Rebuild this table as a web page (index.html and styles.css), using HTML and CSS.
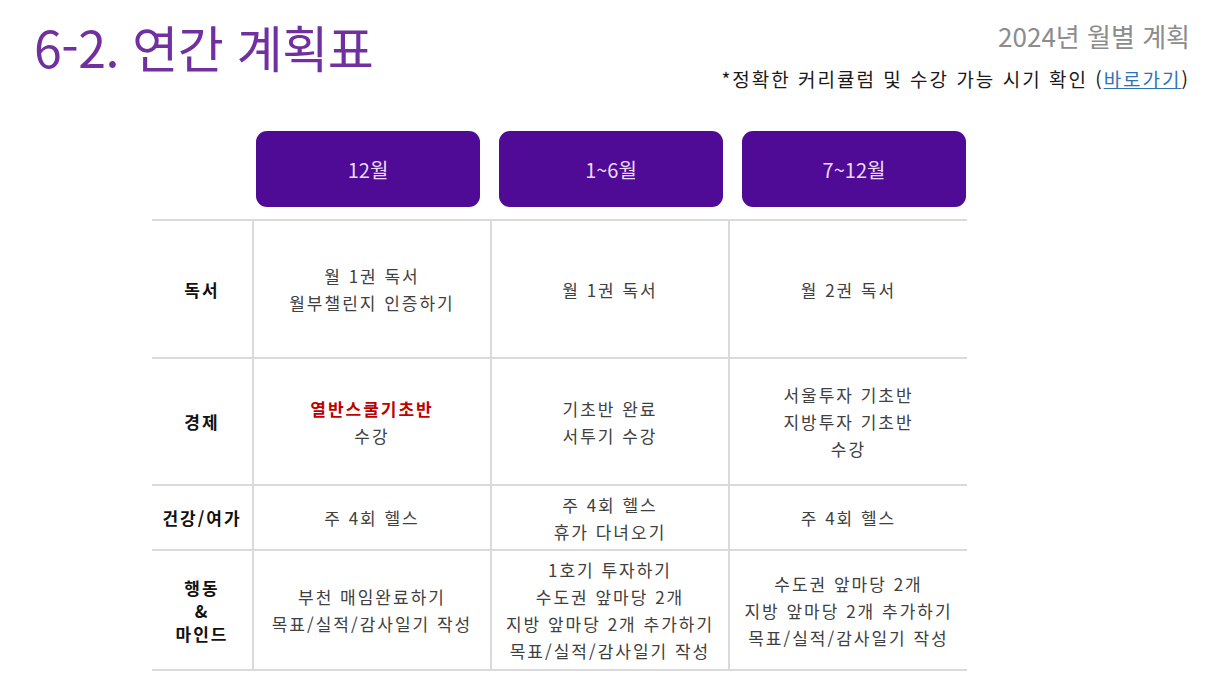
FILE: index.html
```html
<!DOCTYPE html>
<html lang="ko">
  <head>
    <meta charset="UTF-8" />
    <meta name="viewport" content="width=device-width, initial-scale=1.0" />
    <title>6-2. 연간 계획표</title>
    <link rel="stylesheet" href="styles.css">
  </head>
  <body>
    <!-- Page header -->
    <div class="top">
      <h1>6-2. 연간 계획표</h1>
      <div class="info">
        <div class="year">2024년 월별 계획</div>
        <div class="note">*정확한 커리큘럼 및 수강 가능 시기 확인 (<a href="#">바로가기</a>)</div>
      </div>
    </div>

    <div class="plan">
      <!-- Period pills -->
      <div class="periods">
        <div class="pill">12월</div>
        <div class="pill">1~6월</div>
        <div class="pill">7~12월</div>
      </div>

      <table class="grid">
        <colgroup>
          <col class="c-label">
          <col class="c-col">
          <col class="c-col">
          <col class="c-col">
        </colgroup>
        <tr class="r-read">
          <th>독서</th>
          <td>월 1권 독서<br>월부챌린지 인증하기</td>
          <td>월 1권 독서</td>
          <td>월 2권 독서</td>
        </tr>
        <tr class="r-econ">
          <th>경제</th>
          <td><span class="hot">열반스쿨기초반</span><br>수강</td>
          <td>기초반 완료<br>서투기 수강</td>
          <td>서울투자 기초반<br>지방투자 기초반<br>수강</td>
        </tr>
        <tr class="r-health">
          <th>건강/여가</th>
          <td>주 4회 헬스</td>
          <td>주 4회 헬스<br>휴가 다녀오기</td>
          <td>주 4회 헬스</td>
        </tr>
        <tr class="r-act">
          <th>행동<br>&amp;<br>마인드</th>
          <td>부천 매임완료하기<br>목표/실적/감사일기 작성</td>
          <td>1호기 투자하기<br>수도권 앞마당 2개<br>지방 앞마당 2개 추가하기<br>목표/실적/감사일기 작성</td>
          <td>수도권 앞마당 2개<br>지방 앞마당 2개 추가하기<br>목표/실적/감사일기 작성</td>
        </tr>
      </table>
    </div>
  </body>
</html>
```

FILE: styles.css
```css
body {
  margin: 0;
  background-color: #ffffff;
  font-family: "Noto Sans CJK KR", "Noto Sans", sans-serif;
}

/* Header */
.top {
  display: flex;
  justify-content: space-between;
  align-items: flex-start;
  padding: 14px 26px 0 34px;
}

h1 {
  margin: 0;
  font-size: 50px;
  font-weight: 400;
  line-height: 64px;
  color: #7030a0;
  letter-spacing: -0.5px;
}

.info {
  text-align: right;
}

.year {
  font-size: 26px;
  line-height: 32px;
  color: #8c8c8c;
  margin-top: 6px;
}

.note {
  font-size: 19px;
  line-height: 26px;
  color: #1a1a1a;
  margin-top: 14px;
  letter-spacing: 2px;
}

.note a {
  color: #2e74b5;
}

/* Plan table */
.plan {
  width: 814px;
  margin: 39px 0 0 152px;
}

.periods {
  display: flex;
  gap: 19px;
  padding-left: 104px;
}

.pill {
  width: 224px;
  height: 76px;
  border-radius: 11px;
  background-color: #4f0a96;
  color: #eadcf7;
  font-size: 20px;
  display: flex;
  align-items: center;
  justify-content: center;
}

.grid {
  width: 814px;
  margin-top: 12px;
  border-collapse: collapse;
  table-layout: fixed;
}

.c-label {
  width: 101px;
}

.c-col {
  width: 238px;
}

.grid th,
.grid td {
  border-top: 2px solid #dadada;
  border-bottom: 2px solid #dadada;
  padding: 0;
  text-align: center;
  vertical-align: middle;
}

.grid td {
  border-left: 2px solid #dadada;
  font-size: 17px;
  line-height: 27px;
  letter-spacing: 2px;
  color: #404040;
}

.grid th {
  font-size: 17px;
  line-height: 23px;
  font-weight: 700;
  color: #111111;
  letter-spacing: 2px;
}

.r-read {
  height: 138px;
}

.r-econ {
  height: 127px;
}

.r-health {
  height: 65px;
}

.r-act {
  height: 120px;
}

.hot {
  color: #c00000;
  font-weight: 700;
}
```
